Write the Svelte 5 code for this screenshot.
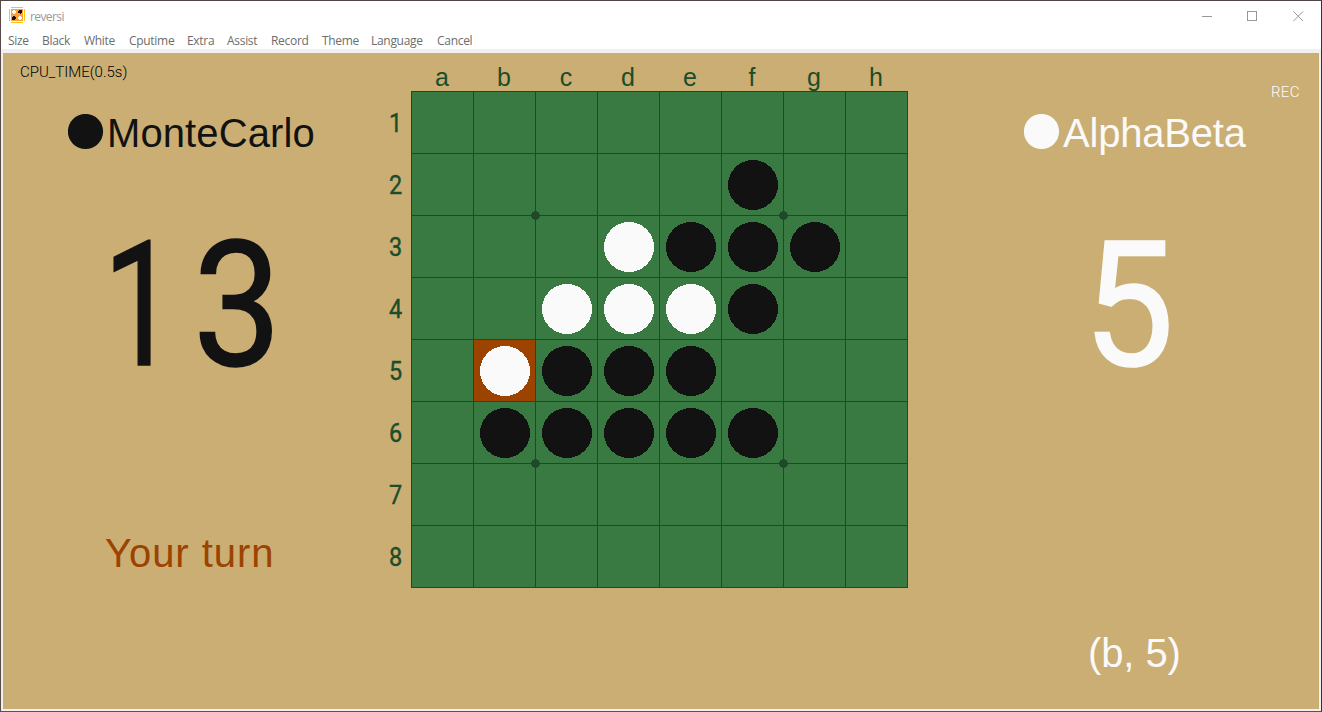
<script>
  const menu = [
    ['Size', 34], ['Black', 42], ['White', 45], ['Cputime', 58], ['Extra', 40],
    ['Assist', 44], ['Record', 51], ['Theme', 49], ['Language', 66], ['Cancel', 50]
  ];
  const columns = ['a', 'b', 'c', 'd', 'e', 'f', 'g', 'h'];
  const position = [
    '........',
    '.....B..',
    '...WBBB.',
    '..WWWB..',
    '.WBBB...',
    '.BBBBB..',
    '........',
    '........'
  ];
  const lastMove = 'b5';
  const cells = position.flatMap((line, r) =>
    [...line].map((piece, c) => ({ piece, name: columns[c] + (r + 1) }))
  );
</script>

<div class="window">
  <header class="titlebar">
    <svg class="logo" width="16" height="16" shape-rendering="crispEdges">
      <path fill="#ffc40c" d="M2 0h12v1H2zM2 15h12v1H2zM0 2h1v12H0zM15 2h1v12h-1z" />
      <path fill="#ff9f3a" d="M2 2h12v12H2z" />
      <path fill="#fff" d="M4 3h2v1h1v2H6v1H4V6H3V4h1zM10 9h2v1h1v2h-1v1h-2v-1H9v-2h1z" />
      <path fill="#111" d="M10 3h3v3h-1v1h-1V6H9V4h1zM4 9h2v1h1v2H6v1H3v-3h1z" />
    </svg>
    <span class="title">reversi</span>
    <svg class="controls" width="104" height="12" fill="none" stroke="#999" shape-rendering="crispEdges">
      <path d="M0 6.500h10M45.500 1.500h9v9h-9z" />
      <path d="M91.500 1.500l9.500 9.500M101 1.500l-9.500 9.500" shape-rendering="auto" />
    </svg>
  </header>
  <nav>
    {#each menu as [label, width]}
      <span style:width="{width}px">{label}</span>
    {/each}
  </nav>

  <main>
    <section class="panel black">
      <div class="status"><span class="cpu">CPU_TIME(0.5s)</span></div>
      <div class="name"><svg width="36" height="36"><circle cx="17.500" cy="17.500" r="17.600" fill="currentColor" /></svg><span>MonteCarlo</span></div>
      <div class="score"><span class="one">1</span><span>3</span></div>
      <div class="turn"><span>Your turn</span></div>
    </section>

    <section class="table">
      <div class="cols">{#each columns as c}<span>{c}</span>{/each}</div>
      <div class="rows">{#each columns as _, i}<span>{i + 1}</span>{/each}</div>
      <div class="board">
        {#each cells as { piece, name }}
          <div class="cell" class:last={name === lastMove}>
            {#if piece !== '.'}
              <svg width="50" height="50" shape-rendering="crispEdges">
                <circle cx="25" cy="25" r="25" fill={piece === 'B' ? '#121212' : '#fafafa'} />
              </svg>
            {/if}
          </div>
        {/each}
        {#each [124, 372] as y}
          {#each [124, 372] as x}
            <svg class="star" width="9" height="9" style:left="{x - 4}px" style:top="{y - 4}px" shape-rendering="crispEdges">
              <circle cx="4.500" cy="4.500" r="4.400" fill="#1f4a27" />
            </svg>
          {/each}
        {/each}
      </div>
    </section>

    <section class="panel white">
      <div class="status"><span class="rec">REC</span></div>
      <div class="name"><svg width="36" height="36"><circle cx="17.500" cy="17.500" r="17.600" fill="currentColor" /></svg><span>AlphaBeta</span></div>
      <div class="score"><span>5</span></div>
      <div></div>
      <div class="move"><span>(b, 5)</span></div>
    </section>
  </main>
</div>

<style>
  .window {
    box-sizing: border-box;
    width: 1322px;
    height: 712px;
    border: 1px solid;
    border-color: #514646 #333 #555 #5c4a4a;
    background: #f0f0f0;
    display: flex;
    flex-direction: column;
    overflow: hidden;
    font-family: "Liberation Sans", sans-serif;
  }
  span {
    display: inline-block;
    white-space: pre;
    transform-origin: 0 50%;
  }
  .titlebar {
    height: 29px;
    flex: none;
    display: flex;
    align-items: center;
    box-sizing: border-box;
    padding: 0 15px 0 8px;
    background: #fff;
  }
  .logo { margin-bottom: 1px; }
  .title {
    margin-left: 5px;
    font: 12px/16px "Open Sans", sans-serif;
    letter-spacing: -0.6px;
    color: #999;
    padding-top: 2px;
  }
  .controls { margin-left: auto; }
  nav {
    height: 19px;
    flex: none;
    display: flex;
    padding-left: 7px;
    background: #fff;
    font: 12px/22px "Open Sans", sans-serif;
    letter-spacing: -0.3px;
    color: #6d6d6d;
  }
  main {
    display: flex;
    width: 1316px;
    height: 656px;
    margin: 4px 0 0 2px;
    background: #cbae74;
  }
  .panel {
    display: grid;
    grid-template-rows: 58px 43px 302px 150px 92px;
  }
  .panel.black { width: 377px; color: #121212; }
  .panel.white { width: 411px; color: #fafafa; }
  .status { font: 300 15px/38px Roboto, sans-serif; }
  .cpu { margin-left: 17px; color: #000; }
  .rec { margin: 20px 0 0 363px; letter-spacing: 0.3px; }
  .name {
    display: flex;
    align-items: center;
    font-size: 40px;
    line-height: 42px;
  }
  .name svg { position: relative; top: -1px; margin-right: 3px; }
  .name span { padding-top: 1px; }
  .black .name { padding-left: 65px; }
  .black .name span { letter-spacing: 0.1px; }
  .white .name { padding-left: 116px; }
  .white .name span { letter-spacing: -0.2px; }
  .score {
    display: flex;
    font: 175px/303px Roboto, sans-serif;
    -webkit-text-stroke: 1.5px currentColor;
  }
  .score span { transform: scaleX(0.9); }
  .score .one { width: 89.5px; transform: scaleX(0.755); }
  .black .score { padding-left: 100px; }
  .white .score { padding-left: 175px; }
  .white .score span { transform: scaleX(0.93); }
  .turn {
    padding: 43px 0 0 102px;
    font-size: 40px;
    line-height: 109px;
    letter-spacing: 0.95px;
    color: #9c4300;
  }
  .move {
    padding-left: 180px;
    font-size: 40px;
    line-height: 94px;
    letter-spacing: -0.1px;
  }
  .table {
    width: 528px;
    display: grid;
    grid-template: 38px 497px / 31px 497px;
    color: #1b4d2a;
  }
  .cols {
    grid-column: 2;
    display: flex;
    font-size: 25px;
    line-height: 49px;
  }
  .cols span { width: 62px; text-align: center; }
  .rows {
    display: flex;
    flex-direction: column;
    font: 26px/64px Roboto, sans-serif;
    text-align: center;
    -webkit-text-stroke: 0.4px currentColor;
  }
  .rows span { height: 62px; transform: scaleX(0.9); transform-origin: 50% 50%; }
  .board {
    position: relative;
    box-sizing: border-box;
    width: 497px;
    height: 497px;
    padding: 1px;
    display: grid;
    grid-template: repeat(8, 61px) / repeat(8, 61px);
    gap: 1px;
    background: #1b4d24;
  }
  .cell { background: #387a41; }
  .cell.last { background: #9c4300; }
  .cell svg { display: block; margin: 6px; }
  .star { position: absolute; }
</style>
